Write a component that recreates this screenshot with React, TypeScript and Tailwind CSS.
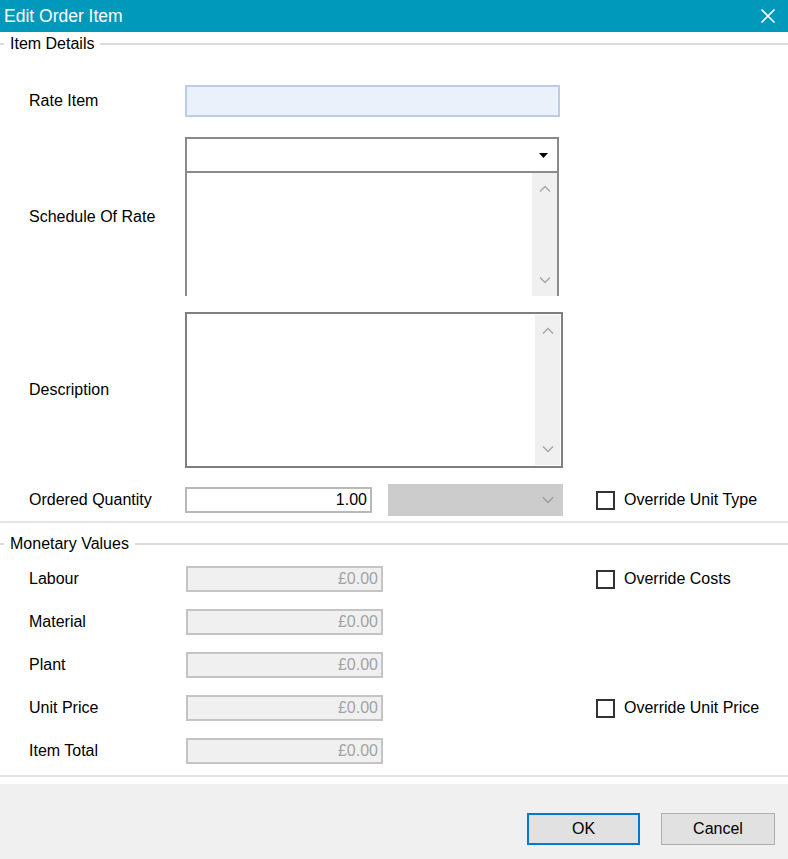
import React from 'react';

const font = { fontFamily: '"Liberation Sans", Arial, sans-serif' };

const ChevronUp = () => (
  <svg width="12" height="8" viewBox="0 0 12 8" fill="none">
    <path d="M1 6.5 L6 1.5 L11 6.5" stroke="#a6a6a6" strokeWidth="1.4" />
  </svg>
);

const ChevronDown = ({ color = '#a6a6a6' }: { color?: string }) => (
  <svg width="12" height="8" viewBox="0 0 12 8" fill="none">
    <path d="M1 1.5 L6 6.5 L11 1.5" stroke={color} strokeWidth="1.4" />
  </svg>
);

const ScrollBar = () => (
  <div className="w-[25px] h-full bg-[#f0f0f0] flex flex-col items-center justify-between py-[12px]">
    <ChevronUp />
    <ChevronDown />
  </div>
);

const GroupHeader = ({ label }: { label: string }) => (
  <div className="flex items-center h-[20px]">
    <div className="w-[4px] h-[2px] bg-[#dcdcdc]" />
    <span className="px-[6px] text-[16px] text-black leading-none">{label}</span>
    <div className="flex-1 h-[2px] bg-[#dcdcdc]" />
  </div>
);

const Check = ({ label }: { label: string }) => (
  <label className="flex items-center gap-[9px] text-[16px] text-black">
    <span className="w-[19px] h-[19px] border-2 border-[#333333] bg-white" />
    {label}
  </label>
);

const Label = ({ text, w }: { text: string; w: string }) => (
  <div className={`${w} text-[16px] text-black`}>{text}</div>
);

export default function App() {
  const money = [
    { label: 'Labour', check: 'Override Costs' },
    { label: 'Material' },
    { label: 'Plant' },
    { label: 'Unit Price', check: 'Override Unit Price' },
    { label: 'Item Total' },
  ];

  return (
    <div className="w-[788px] h-[859px] bg-white flex flex-col overflow-hidden" style={font}>
      {/* title bar */}
      <div className="h-[32px] bg-[#0099bc] flex items-center justify-between pl-[4px] pr-[12px]">
        <span className="text-white text-[17.5px]">Edit Order Item</span>
        <svg width="16" height="16" viewBox="0 0 16 16">
          <path d="M1.5 1.5 L14.5 14.5 M14.5 1.5 L1.5 14.5" stroke="#ffffff" strokeWidth="1.6" />
        </svg>
      </div>

      {/* Item Details */}
      <div className="mt-[2px]">
        <GroupHeader label="Item Details" />
      </div>

      <div className="flex flex-col pl-[29px]">
        <div className="flex items-center mt-[31px]">
          <Label text="Rate Item" w="w-[156px]" />
          <div className="w-[375px] h-[32px] bg-[#eaf1fb] border-2 border-[#bccbe6]" />
        </div>

        <div className="flex items-center mt-[20px]">
          <Label text="Schedule Of Rate" w="w-[156px]" />
          <div className="flex flex-col w-[374px]">
            <div className="h-[36px] border-2 border-[#8a8a8a] bg-white flex items-center justify-end pr-[9px]">
              <svg width="9" height="5" viewBox="0 0 9 5">
                <path d="M0 0 L9 0 L4.5 5 Z" fill="#000000" />
              </svg>
            </div>
            <div className="h-[123px] border-x-2 border-[#8a8a8a] bg-white flex justify-end">
              <ScrollBar />
            </div>
          </div>
        </div>

        <div className="flex items-center mt-[16px]">
          <Label text="Description" w="w-[156px]" />
          <div className="w-[378px] h-[156px] border-2 border-[#7f7f7f] bg-white flex justify-end p-[1px]">
            <ScrollBar />
          </div>
        </div>

        <div className="flex items-center mt-[16px] h-[32px]">
          <Label text="Ordered Quantity" w="w-[156px]" />
          <div className="w-[187px] h-[26px] border-2 border-[#b8b8b8] bg-white flex items-center justify-end pr-[3px] text-[16px] text-black">
            1.00
          </div>
          <div className="ml-[16px] w-[175px] h-[32px] bg-[#cccccc] flex items-center justify-end pr-[9px]">
            <ChevronDown color="#9a9a9a" />
          </div>
          <div className="ml-[33px]">
            <Check label="Override Unit Type" />
          </div>
        </div>
      </div>

      <div className="mt-[5px] h-[2px] bg-[#e3e3e3]" />

      {/* Monetary Values */}
      <div className="mt-[11px]">
        <GroupHeader label="Monetary Values" />
      </div>

      <div className="flex flex-col gap-[17px] pl-[29px] mt-[12px]">
        {money.map((m) => (
          <div key={m.label} className="flex items-center h-[26px]">
            <Label text={m.label} w="w-[157px]" />
            <div className="w-[197px] h-[26px] border-2 border-[#c4c4c4] bg-[#f0f0f0] flex items-center justify-end pr-[3px] text-[16px] text-[#a3a3a3]">
              £0.00
            </div>
            {m.check && (
              <div className="ml-[213px]">
                <Check label={m.check} />
              </div>
            )}
          </div>
        ))}
      </div>

      <div className="mt-[11px] h-[2px] bg-[#e3e3e3]" />

      {/* footer */}
      <div className="mt-[7px] flex-1 bg-[#f0f0f0] flex justify-end items-start pt-[29px] pr-[13px] gap-[21px]">
        <button className="w-[113px] h-[32px] bg-[#e1e1e1] border-2 border-[#0078d7] text-[16px] text-black">
          OK
        </button>
        <button className="w-[114px] h-[32px] bg-[#e1e1e1] border border-[#adadad] text-[16px] text-black">
          Cancel
        </button>
      </div>
    </div>
  );
}
